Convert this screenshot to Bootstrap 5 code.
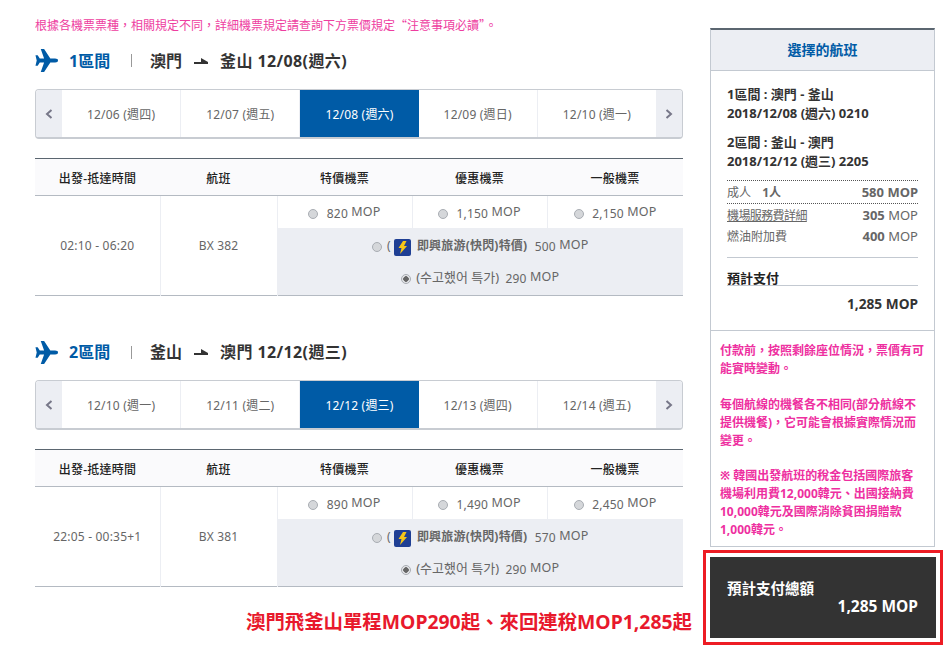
<!DOCTYPE html>
<html lang="zh-Hant">
<head>
  <meta charset="UTF-8" />
  <meta name="viewport" content="width=device-width, initial-scale=1" />
  <title>選擇的航班</title>
  <link href="https://cdn.jsdelivr.net/npm/bootstrap@5.3.0/dist/css/bootstrap.min.css" rel="stylesheet" />
  <style>
  body {
    font-family: "Noto Sans", "Noto Sans CJK TC", sans-serif;
    font-size: 12px;
    color: #666;
    background: #fff;
    overflow: hidden;
  }
  .page-wrap { width: 949px; height: 650px; padding: 0 6px 0 35px; gap: 27px; }
  .left-col { width: 648px; }
  .right-col { width: 225px; padding-top: 28px; }

  .top-note { font-family: "Noto Sans CJK TC", sans-serif; color: #ee3d9f; font-size: 12px; line-height: 16px; padding-top: 17px; height: 32px; margin: 0; }
  .seg-head { height: 58px; font-size: 16px; font-weight: 700; color: #333; }
  .seg-head.first { height: 57px; }
  .seg-head.second { margin-top: 26px; padding-top: 2px; }
  .seg-no { color: #005ba6; width: 49px; margin-left: 11px; white-space: nowrap; }
  .seg-sep { width: 1px; height: 13px; background: #999; margin: 0 18px 0 13px; }
  .route-arrow { margin: 0 12px 0 12px; }
  .seg-date { letter-spacing: .4px; }

  .date-bar { height: 50px; border: 1px solid #c8ccd2; border-bottom-width: 2px; border-radius: 4px; overflow: hidden; }
  .date-arrow { width: 26px; background: #eceef3; color: #778; font-weight: 700; }
  .date-item { flex: 1 1 0; font-size: 12px; letter-spacing: .2px; padding-top: 2px; color: #666; border-right: 1px solid #eceef3; }
  .date-item.last-item { border-right: 0; }
  .date-item.on { background: #005ba6; color: #fff; border-right: 0; }

  .fare-table { margin: 19px 0 0; table-layout: fixed; width: 648px; letter-spacing: .2px; border-top: 1px solid #5b6670; border-bottom: 1px solid #b4bac2; }
  .fare-table th { height: 37px; padding: 3px 0 0; background: #fafafc; font-size: 12px; font-weight: 500; color: #222; text-align: center; vertical-align: middle; border-bottom: 1px solid #b4bac2; }
  .fare-table td { padding: 0; text-align: center; vertical-align: middle; color: #666; font-size: 12px; border-bottom: 0; }
  .fare-table .cell-line { border-right: 1px solid #eceef3; }
  .fare-table .price-cell { height: 32px; padding-top: 3px; }
  .fare-table .sale-cell { height: 34px; padding-top: 3px; background: #eceef3; }
  .fare-table .sale-cell.lower { padding-top: 0; }
  .sale-name { font-weight: 700; margin-right: 4px; }
  .sale-ko { font-size: 13px; letter-spacing: 0; margin-right: 3px; }
  .mop { font-size: 12.5px; position: relative; top: -1px; }
  .amt { position: relative; top: 1px; }
  .fare-radio { width: 10px; height: 10px; margin: 0 5px 0 0; vertical-align: -2px; float: none; background-color: #d5d7da; border: 1px solid #a9adb3; }
  .fare-radio:checked { background-color: #e4e5e8; border-color: #a9adb3; background-image: radial-gradient(circle, #666 0 2.5px, transparent 3px); }
  .bolt-badge { display: inline-flex; width: 17px; height: 17px; border-radius: 2px; background: #1f3f94; align-items: center; justify-content: center; vertical-align: -4px; margin: 0 6px 0 3px; }

  .promo-line { color: #e8192c; font-size: 19.4px; font-weight: 700; text-align: right; margin: 22px -9px 0 0; line-height: 26px; white-space: nowrap; }

  .sum-card { border: 1px solid #c3c9d1; border-top: 2px solid #5b6670; border-radius: 0; height: 519px; }
  .sum-card .card-header { height: 41px; background: #eceef3; border-bottom: 1px solid #c3c9d1; border-radius: 0; color: #005ba6; font-size: 14px; font-weight: 700; padding: 0 0 2px; }
  .sum-flights { padding: 14px 16px 0; font-weight: 700; color: #333; font-size: 13px; line-height: 19px; height: 109px; }
  .sum-flights p { margin: 0 0 10px; }
  .sum-lines { padding: 0 16px; }
  .sum-row { font-size: 12px; color: #666; padding-top: 2px; }
  .sum-row.dotted { border-top: 1px dotted #555; height: 23px; }
  .sum-row.dotted + .plain { border-top: 1px dotted #555; }
  .sum-row.plain { height: 22px; }
  .sum-row .thick { font-weight: 700; }
  .sum-row .mop-side { font-size: 13px; }
  .sum-row .air-link { text-decoration: underline; color: #666; letter-spacing: -.6px; }
  .sum-sub { border-top: 1px solid #c3c9d1; margin-top: 10px; height: 29px; line-height: 14px; font-size: 13px; font-weight: 700; color: #222; border-bottom: 1px solid #c3c9d1; }
  .sum-total { height: 44px; font-size: 13.7px; font-weight: 700; color: #333; text-align: right; padding-top: 8px; }
  .sum-warn { border-top: 1px solid #c3c9d1; padding: 11px 10px 0 9px; color: #ee2fa0; font-size: 12px; font-weight: 700; line-height: 18px; }
  .sum-warn p { margin: 0 0 17.5px; }
  .pay-frame { position: absolute; left: 703px; top: 550px; width: 240px; height: 95px; border: 3px solid #ed1c24; padding: 4px; }
  .pay-box { background: #333; color: #fff; height: 100%; font-weight: 700; padding: 22px 18px 0 17px; font-size: 14.5px; line-height: 18px; }
  .pay-box div + div { text-align: right; font-size: 15.5px; }
  </style>
</head>
<body>
<div class="page-wrap d-flex">
  <div class="left-col">
    <p class="top-note">根據各機票票種，相關規定不同，詳細機票規定請查詢下方票價規定“注意事項必讀”。</p>

    <div class="seg-head first d-flex align-items-center">
      <svg width="23" height="23" viewBox="0 0 24 24"><path fill="#005ba6" d="M24 12 Q24 10 21 10 L16 10 L9.5 0 L6 0 L9.5 10 L5 10 L2.8 6.5 L0.5 6.5 L1.8 12 L0.5 17.5 L2.8 17.5 L5 14 L9.5 14 L6 24 L9.5 24 L16 14 L21 14 Q24 14 24 12 Z"/></svg>
      <span class="seg-no">1區間</span><span class="seg-sep"></span>
      <span>澳門</span>
      <svg class="route-arrow" width="14" height="8" viewBox="0 0 14 8"><path fill="#333" d="M0 5 H14 V7 H0 Z M7 5 L7 1 L14 5 Z"/></svg>
      <span class="seg-date">釜山 12/08(週六)</span>
    </div>

    <div class="date-bar d-flex">
      <div class="date-arrow d-flex align-items-center justify-content-center"><svg width="8" height="10" viewBox="0 0 8 10"><path fill="none" stroke="#778" stroke-width="2" d="M6.5 1 L2 5 L6.5 9"/></svg></div>
      <div class="date-item d-flex align-items-center justify-content-center">12/06 (週四)</div>
      <div class="date-item d-flex align-items-center justify-content-center">12/07 (週五)</div>
      <div class="date-item on d-flex align-items-center justify-content-center">12/08 (週六)</div>
      <div class="date-item d-flex align-items-center justify-content-center">12/09 (週日)</div>
      <div class="date-item last-item d-flex align-items-center justify-content-center">12/10 (週一)</div>
      <div class="date-arrow d-flex align-items-center justify-content-center"><svg width="8" height="10" viewBox="0 0 8 10"><path fill="none" stroke="#778" stroke-width="2" d="M1.5 1 L6 5 L1.5 9"/></svg></div>
    </div>

    <table class="table fare-table">
      <colgroup><col style="width:125px"><col style="width:117px"><col style="width:135px"><col style="width:135px"><col style="width:136px"></colgroup>
      <thead>
        <tr><th>出發-抵達時間</th><th>航班</th><th>特價機票</th><th>優惠機票</th><th>一般機票</th></tr>
      </thead>
      <tbody>
        <tr>
          <td rowspan="3" class="cell-line">02:10 - 06:20</td>
          <td rowspan="3" class="cell-line">BX 382</td>
          <td class="price-cell cell-line"><input class="form-check-input fare-radio" type="radio" name="a1"> <span class="amt">820</span> <span class="mop">MOP</span></td>
          <td class="price-cell cell-line"><input class="form-check-input fare-radio" type="radio" name="a1"> <span class="amt">1,150</span> <span class="mop">MOP</span></td>
          <td class="price-cell"><input class="form-check-input fare-radio" type="radio" name="a1"> <span class="amt">2,150</span> <span class="mop">MOP</span></td>
        </tr>
        <tr>
          <td colspan="3" class="sale-cell"><input class="form-check-input fare-radio" type="radio" name="a1">(<span class="bolt-badge"><svg width="9" height="13" viewBox="0 0 9 13"><path fill="#f5c518" d="M5 0 H8.5 L6 5 H9 L2 13 L3.5 7 H0.5 Z"/></svg></span><span class="sale-name">即興旅游(快閃)特價)</span> <span class="amt">500</span> <span class="mop">MOP</span></td>
        </tr>
        <tr>
          <td colspan="3" class="sale-cell lower"><input class="form-check-input fare-radio" type="radio" name="a1" checked><span class="sale-ko">(수고했어 특가)</span> <span class="amt">290</span> <span class="mop">MOP</span></td>
        </tr>
      </tbody>
    </table>

    <div class="seg-head second d-flex align-items-center">
      <svg width="23" height="23" viewBox="0 0 24 24"><path fill="#005ba6" d="M24 12 Q24 10 21 10 L16 10 L9.5 0 L6 0 L9.5 10 L5 10 L2.8 6.5 L0.5 6.5 L1.8 12 L0.5 17.5 L2.8 17.5 L5 14 L9.5 14 L6 24 L9.5 24 L16 14 L21 14 Q24 14 24 12 Z"/></svg>
      <span class="seg-no">2區間</span><span class="seg-sep"></span>
      <span>釜山</span>
      <svg class="route-arrow" width="14" height="8" viewBox="0 0 14 8"><path fill="#333" d="M0 5 H14 V7 H0 Z M7 5 L7 1 L14 5 Z"/></svg>
      <span class="seg-date">澳門 12/12(週三)</span>
    </div>

    <div class="date-bar d-flex">
      <div class="date-arrow d-flex align-items-center justify-content-center"><svg width="8" height="10" viewBox="0 0 8 10"><path fill="none" stroke="#778" stroke-width="2" d="M6.5 1 L2 5 L6.5 9"/></svg></div>
      <div class="date-item d-flex align-items-center justify-content-center">12/10 (週一)</div>
      <div class="date-item d-flex align-items-center justify-content-center">12/11 (週二)</div>
      <div class="date-item on d-flex align-items-center justify-content-center">12/12 (週三)</div>
      <div class="date-item d-flex align-items-center justify-content-center">12/13 (週四)</div>
      <div class="date-item last-item d-flex align-items-center justify-content-center">12/14 (週五)</div>
      <div class="date-arrow d-flex align-items-center justify-content-center"><svg width="8" height="10" viewBox="0 0 8 10"><path fill="none" stroke="#778" stroke-width="2" d="M1.5 1 L6 5 L1.5 9"/></svg></div>
    </div>

    <table class="table fare-table">
      <colgroup><col style="width:125px"><col style="width:117px"><col style="width:135px"><col style="width:135px"><col style="width:136px"></colgroup>
      <thead>
        <tr><th>出發-抵達時間</th><th>航班</th><th>特價機票</th><th>優惠機票</th><th>一般機票</th></tr>
      </thead>
      <tbody>
        <tr>
          <td rowspan="3" class="cell-line">22:05 - 00:35+1</td>
          <td rowspan="3" class="cell-line">BX 381</td>
          <td class="price-cell cell-line"><input class="form-check-input fare-radio" type="radio" name="a2"> <span class="amt">890</span> <span class="mop">MOP</span></td>
          <td class="price-cell cell-line"><input class="form-check-input fare-radio" type="radio" name="a2"> <span class="amt">1,490</span> <span class="mop">MOP</span></td>
          <td class="price-cell"><input class="form-check-input fare-radio" type="radio" name="a2"> <span class="amt">2,450</span> <span class="mop">MOP</span></td>
        </tr>
        <tr>
          <td colspan="3" class="sale-cell"><input class="form-check-input fare-radio" type="radio" name="a2">(<span class="bolt-badge"><svg width="9" height="13" viewBox="0 0 9 13"><path fill="#f5c518" d="M5 0 H8.5 L6 5 H9 L2 13 L3.5 7 H0.5 Z"/></svg></span><span class="sale-name">即興旅游(快閃)特價)</span> <span class="amt">570</span> <span class="mop">MOP</span></td>
        </tr>
        <tr>
          <td colspan="3" class="sale-cell lower"><input class="form-check-input fare-radio" type="radio" name="a2" checked><span class="sale-ko">(수고했어 특가)</span> <span class="amt">290</span> <span class="mop">MOP</span></td>
        </tr>
      </tbody>
    </table>

    <p class="promo-line">澳門飛釜山單程MOP290起、來回連稅MOP1,285起</p>
  </div>

  <div class="right-col">
    <div class="card sum-card">
      <div class="card-header d-flex align-items-center justify-content-center">選擇的航班</div>
      <div class="sum-flights">
        <p>1區間 : 澳門 - 釜山<br>2018/12/08 (週六) 0210</p>
        <p>2區間 : 釜山 - 澳門<br>2018/12/12 (週三) 2205</p>
      </div>
      <div class="sum-lines">
        <div class="sum-row dotted d-flex align-items-center justify-content-between"><span>成人 <span class="thick ms-2">1人</span></span><span class="thick mop-side">580 MOP</span></div>
        <div class="sum-row plain d-flex align-items-center justify-content-between"><span class="air-link">機場服務費詳細</span><span class="mop-side"><span class="thick">305</span> MOP</span></div>
        <div class="sum-row plain d-flex align-items-center justify-content-between"><span>燃油附加費</span><span class="mop-side"><span class="thick">400</span> MOP</span></div>
        <div class="sum-sub d-flex align-items-end">預計支付</div>
        <div class="sum-total">1,285 MOP</div>
      </div>
      <div class="sum-warn">
        <p>付款前，按照剩餘座位情況，票價有可能實時變動。</p>
        <p>每個航線的機餐各不相同(部分航線不提供機餐)，它可能會根據實際情況而變更。</p>
        <p class="mb-0">※ 韓國出發航班的稅金包括國際旅客機場利用費12,000韓元、出國接納費10,000韓元及國際消除貧困捐贈款1,000韓元。</p>
      </div>
    </div>
  </div>
</div>
<div class="pay-frame">
  <div class="pay-box">
    <div>預計支付總額</div>
    <div>1,285 MOP</div>
  </div>
</div>
<script src="https://cdn.jsdelivr.net/npm/bootstrap@5.3.0/dist/js/bootstrap.bundle.min.js"></script>
</body>
</html>
